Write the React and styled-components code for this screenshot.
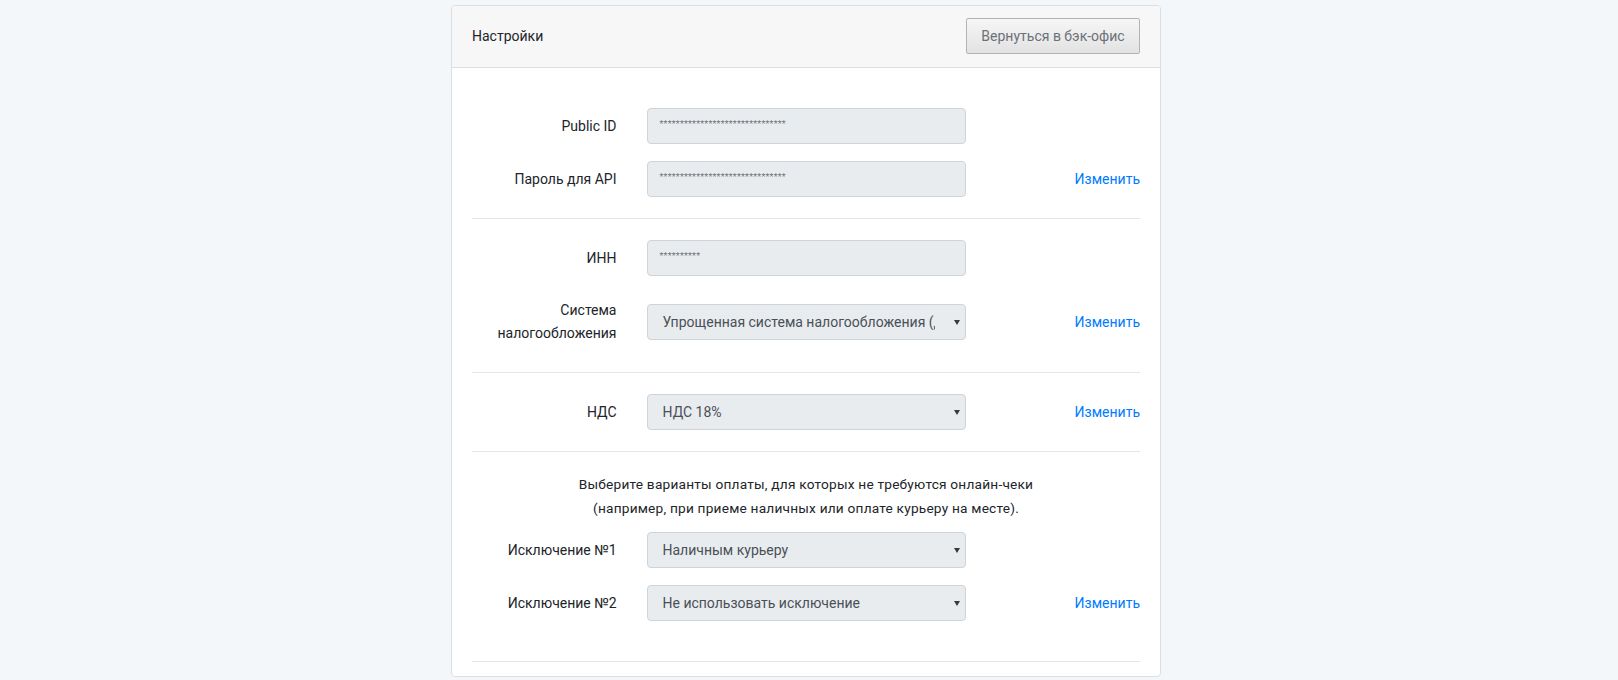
import React from 'react'
import styled, { createGlobalStyle } from 'styled-components'

const GlobalStyle = createGlobalStyle`
  body {
    margin: 0;
    background: #f3f7fa;
    font-family: Roboto, "Liberation Sans", Arial, sans-serif;
    font-size: 14px;
    color: #212529;
  }
`

const dots = (n) => '*'.repeat(n)

const App = () => {
  return (
    <Page>
      <GlobalStyle />
      <Card>
        {/* header */}
        <CardHeader>
          <Title>Настройки</Title>
          <BackButton type="button">Вернуться в бэк-офис</BackButton>
        </CardHeader>

        <CardBody>
          {/* keys */}
          <Section>
            <Row>
              <Label>Public ID</Label>
              <Field>
                <Masked>{dots(31)}</Masked>
              </Field>
              <Action />
            </Row>
            <Row>
              <Label>Пароль для API</Label>
              <Field>
                <Masked>{dots(31)}</Masked>
              </Field>
              <Action>
                <EditLink href="#">Изменить</EditLink>
              </Action>
            </Row>
          </Section>

          {/* company */}
          <Section>
            <Row>
              <Label>ИНН</Label>
              <Field>
                <Masked>{dots(10)}</Masked>
              </Field>
              <Action />
            </Row>
            <Row>
              <Label $tight>Система налогообложения</Label>
              <Field>
                <Select disabled defaultValue="usn">
                  <option value="usn">Упрощенная система налогообложения (доходы)</option>
                </Select>
              </Field>
              <Action>
                <EditLink href="#">Изменить</EditLink>
              </Action>
            </Row>
          </Section>

          {/* vat */}
          <Section>
            <Row>
              <Label>НДС</Label>
              <Field>
                <Select disabled defaultValue="18">
                  <option value="18">НДС 18%</option>
                </Select>
              </Field>
              <Action>
                <EditLink href="#">Изменить</EditLink>
              </Action>
            </Row>
          </Section>

          {/* exceptions */}
          <Section $bottom={39}>
            <Hint>
              Выберите варианты оплаты, для которых не требуются онлайн-чеки
              <br />
              (например, при приеме наличных или оплате курьеру на месте).
            </Hint>
            <Row>
              <Label>Исключение №1</Label>
              <Field>
                <Select disabled defaultValue="cash">
                  <option value="cash">Наличным курьеру</option>
                </Select>
              </Field>
              <Action />
            </Row>
            <Row>
              <Label>Исключение №2</Label>
              <Field>
                <Select disabled defaultValue="none">
                  <option value="none">Не использовать исключение</option>
                </Select>
              </Field>
              <Action>
                <EditLink href="#">Изменить</EditLink>
              </Action>
            </Row>
          </Section>
        </CardBody>
      </Card>
    </Page>
  )
}

export default App

const Page = styled.div`
  display: flex;
  justify-content: center;
  padding: 5px 6px 0 0;
`

const Card = styled.div`
  width: 710px;
  box-sizing: border-box;
  background: #fff;
  border: 1px solid #dcdfe2;
  border-radius: 4px;
  overflow: hidden;
`

const CardHeader = styled.div`
  display: flex;
  align-items: center;
  justify-content: space-between;
  padding: 12px 20px 13px;
  background: #f7f7f7;
  border-bottom: 1px solid #dcdfe2;
`

const Title = styled.div`
  font-size: 14px;
  color: #212529;
`

const BackButton = styled.button`
  height: 36px;
  width: 174px;
  padding: 0 12px;
  font-family: inherit;
  font-size: 14px;
  color: #6c7178;
  background: linear-gradient(#f6f6f6, #e2e2e2);
  border: 1px solid #b3b3b3;
  border-radius: 2px;
  cursor: pointer;
`

const CardBody = styled.div`
  padding: 19px 20px 14px;
`

const Section = styled.div`
  display: flex;
  flex-direction: column;
  gap: 15px;
  padding: 20px 0 ${(p) => p.$bottom || 20}px;
  border-bottom: 1px solid #e5e6e8;
`

const Row = styled.div`
  display: grid;
  grid-template-columns: 1fr 2fr 1fr;
  align-items: center;
  margin: 0 -15px;

  & > * {
    padding: 0 15px;
  }
`

const Label = styled.label`
  text-align: right;
  line-height: ${(p) => (p.$tight ? 23 : 24)}px;
  padding-top: 7px !important;
  padding-bottom: 7px !important;
  color: #212529;
`

const Field = styled.div`
  position: relative;
`

const Action = styled.div`
  text-align: right;
`

const EditLink = styled.a`
  color: #007bff;
  text-decoration: none;
`

const Masked = styled.div`
  box-sizing: border-box;
  height: 36px;
  padding: 9px 12px 0;
  background: #e9ecef;
  border: 1px solid #ced4da;
  border-radius: 4px;
  color: #6f757b;
  font-size: 9px;
  line-height: 12px;
  letter-spacing: 0.2px;
  overflow: hidden;
  white-space: nowrap;
`

const SelectBox = styled.select`
  box-sizing: border-box;
  width: 100%;
  height: 36px;
  padding: 0 30px 0 15px;
  appearance: none;
  -webkit-appearance: none;
  background: #e9ecef;
  border: 1px solid #ced4da;
  border-radius: 4px;
  font-family: inherit;
  font-size: 14px;
  color: #495057;
  opacity: 1;
`

const Caret = styled.span`
  position: absolute;
  right: 21px;
  top: 16px;
  width: 0;
  height: 0;
  border-left: 3px solid transparent;
  border-right: 3px solid transparent;
  border-top: 5px solid #343a40;
  pointer-events: none;
`

const Select = (props) => (
  <>
    <SelectBox {...props} />
    <Caret />
  </>
)

const Hint = styled.p`
  margin: 0 0 -4px;
  text-align: center;
  font-size: 13.7px;
  letter-spacing: 0.2px;
  line-height: 24px;
  color: #212529;
`
